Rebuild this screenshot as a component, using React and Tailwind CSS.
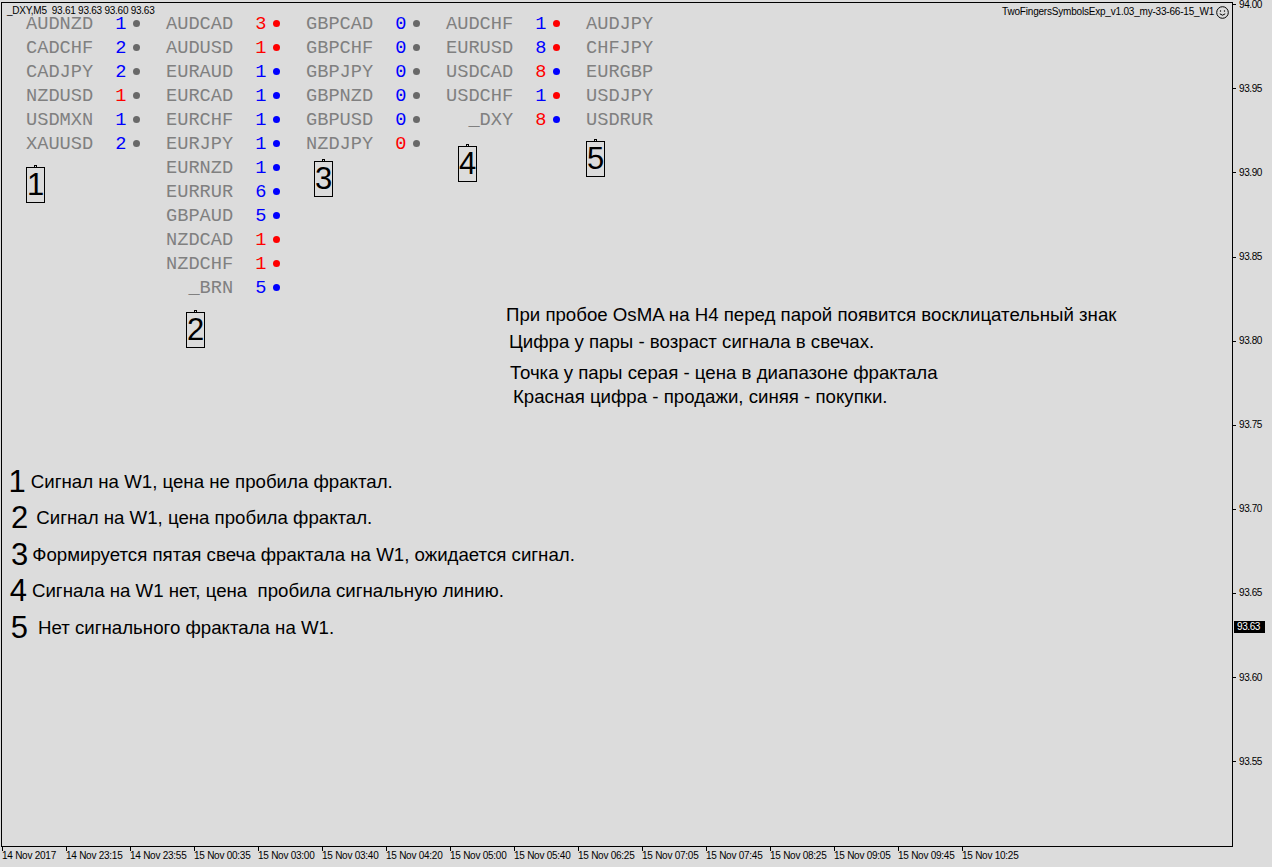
import React from 'react';

const numColor = { b: 'text-[#0000ff]', r: 'text-[#ff0000]' };
const dotColor = { b: 'bg-[#0000ff]', r: 'bg-[#ff0000]', g: 'bg-[#696969]' };

// name, age, age colour, dot colour
const columns = [
    [
        ['AUDNZD', '1', 'b', 'g'],
        ['CADCHF', '2', 'b', 'g'],
        ['CADJPY', '2', 'b', 'g'],
        ['NZDUSD', '1', 'r', 'g'],
        ['USDMXN', '1', 'b', 'g'],
        ['XAUUSD', '2', 'b', 'g'],
    ],
    [
        ['AUDCAD', '3', 'r', 'r'],
        ['AUDUSD', '1', 'r', 'r'],
        ['EURAUD', '1', 'b', 'b'],
        ['EURCAD', '1', 'b', 'b'],
        ['EURCHF', '1', 'b', 'b'],
        ['EURJPY', '1', 'b', 'b'],
        ['EURNZD', '1', 'b', 'b'],
        ['EURRUR', '6', 'b', 'b'],
        ['GBPAUD', '5', 'b', 'b'],
        ['NZDCAD', '1', 'r', 'r'],
        ['NZDCHF', '1', 'r', 'r'],
        ['_BRN', '5', 'b', 'b'],
    ],
    [
        ['GBPCAD', '0', 'b', 'g'],
        ['GBPCHF', '0', 'b', 'g'],
        ['GBPJPY', '0', 'b', 'g'],
        ['GBPNZD', '0', 'b', 'g'],
        ['GBPUSD', '0', 'b', 'g'],
        ['NZDJPY', '0', 'r', 'g'],
    ],
    [
        ['AUDCHF', '1', 'b', 'r'],
        ['EURUSD', '8', 'b', 'r'],
        ['USDCAD', '8', 'r', 'b'],
        ['USDCHF', '1', 'b', 'r'],
        ['_DXY', '8', 'r', 'b'],
    ],
    [['AUDJPY'], ['CHFJPY'], ['EURGBP'], ['USDJPY'], ['USDRUR']],
];

const prices = ['94.00', '93.95', '93.90', '93.85', '93.80', '93.75', '93.70', '93.65', '93.60', '93.55'];

const times = [
    '14 Nov 2017', '14 Nov 23:15', '14 Nov 23:55', '15 Nov 00:35', '15 Nov 03:00', '15 Nov 03:40',
    '15 Nov 04:20', '15 Nov 05:00', '15 Nov 05:40', '15 Nov 06:25', '15 Nov 07:05', '15 Nov 07:45',
    '15 Nov 08:25', '15 Nov 09:05', '15 Nov 09:45', '15 Nov 10:25',
];

const Pair = ({ row }) => {
    const [name, age, nc, dc] = row;
    return (
        <div className="flex h-[24px] items-center leading-[16px]">
            <span className="w-[67.2px] text-right whitespace-pre text-[#808080]">{name}</span>
            {age && (
                <>
                    <span className={`ml-[22px] w-[11.2px] ${numColor[nc]}`}>{age}</span>
                    <span className={`mb-[2px] ml-[7px] h-[7px] w-[7px] rounded-full ${dotColor[dc]}`} />
                </>
            )}
        </div>
    );
};

// numbered price-label objects on the chart
const Tag = ({ n, pos }) => (
    <div className={`absolute ${pos} flex h-[36px] w-[19px] items-center justify-center border border-black text-[31px] leading-[32px] text-black`}>
        <span className="absolute -top-[3px] left-[7px] h-[3px] w-[3px] border border-b-0 border-black" />
        {n}
    </div>
);

const Smiley = () => (
    <svg width="13" height="13" viewBox="0 0 13 13" fill="none" stroke="black" strokeWidth="1">
        <circle cx="6.5" cy="6.5" r="5.8" />
        <circle cx="4.5" cy="5" r="0.7" fill="black" stroke="none" />
        <circle cx="8.5" cy="5" r="0.7" fill="black" stroke="none" />
        <path d="M3.8 7.8 Q6.5 10.6 9.2 7.8" />
    </svg>
);

const legend = [
    ['1', 'Сигнал на W1, цена не пробила фрактал.', 'h-[37px]', 'ml-[6.6px]', 'ml-[5px]'],
    ['2', 'Сигнал на W1, цена пробила фрактал.', 'h-[36px]', 'ml-[9px]', 'ml-[8px]'],
    ['3', 'Формируется пятая свеча фрактала на W1, ожидается сигнал.', 'h-[37px]', 'ml-[9px]', 'ml-[4px]'],
    ['4', 'Сигнала на W1 нет, цена  пробила сигнальную линию.', 'h-[36px]', 'ml-[7.7px]', 'ml-[5px]'],
    ['5', 'Нет сигнального фрактала на W1.', 'h-[37px]', 'ml-[8.8px]', 'ml-[10px]'],
];

export default function App() {
    return (
        <div className="h-[867px] w-[1272px] overflow-hidden bg-[#dcdcdc] font-['Liberation_Sans',Arial,sans-serif] text-black">
            <div className="flex">
                {/* chart window */}
                <div className="relative ml-[1px] mt-[2px] h-[845px] w-[1232px] border border-black">
                    <div className="absolute left-[5px] top-[3.2px] whitespace-pre text-[10px] leading-[9px] tracking-[-0.25px]">
                        _DXY,M5  93.61 93.63 93.60 93.63
                    </div>
                    <div className="absolute right-[3px] top-[3px] flex items-start gap-[2px]">
                        <span className="text-[10px] leading-[12px] tracking-[-0.2px]">TwoFingersSymbolsExp_v1.03_my-33-66-15_W1</span>
                        <Smiley />
                    </div>

                    <div className="flex pl-[24px] pt-[9px] font-['Liberation_Mono','Courier_New',monospace] text-[18.67px]">
                        {columns.map((col, i) => (
                            <div key={i} className="w-[140px]">
                                {col.map((row) => (
                                    <Pair key={row[0]} row={row} />
                                ))}
                            </div>
                        ))}
                    </div>

                    <Tag n="1" pos="left-[24px] top-[164px]" />
                    <Tag n="2" pos="left-[184px] top-[309px]" />
                    <Tag n="3" pos="left-[312px] top-[158px]" />
                    <Tag n="4" pos="left-[456px] top-[143px]" />
                    <Tag n="5" pos="left-[584px] top-[138px]" />

                    <div className="ml-[504px] mt-[5px] text-[18.67px] leading-[20px]">
                        <div>При пробое OsMA на H4 перед парой появится восклицательный знак</div>
                        <div className="mt-[7px] pl-[3px]">Цифра у пары - возраст сигнала в свечах.</div>
                        <div className="mt-[11px] pl-[4px]">Точка у пары серая - цена в диапазоне фрактала</div>
                        <div className="mt-[4px] pl-[7px]">Красная цифра - продажи, синяя - покупки.</div>
                    </div>

                    <div className="mt-[56px]">
                        {legend.map(([n, text, h, dm, tm]) => (
                            <div key={n} className={`flex items-center ${h}`}>
                                <span className={`${dm} text-[31px] leading-[36px]`}>{n}</span>
                                <span className={`${tm} whitespace-pre text-[18.67px] leading-[36px]`}>{text}</span>
                            </div>
                        ))}
                    </div>
                </div>

                {/* price scale */}
                <div className="relative flex flex-1 flex-col pt-[4.8px]">
                    {prices.map((p) => (
                        <div key={p} className="flex h-[84.1px] shrink-0 flex-col">
                            <div className="-mt-[6px] flex h-[12px] items-center">
                                <span className="h-px w-[3px] bg-black" />
                                <span className="ml-[3px] text-[10px] leading-[12px] tracking-[-0.4px]">{p}</span>
                            </div>
                        </div>
                    ))}
                    <div className="absolute left-[1px] top-[621px] h-[12px] w-[31px] bg-black pl-[3px] text-[10px] leading-[12px] tracking-[-0.4px] text-white">
                        93.63
                    </div>
                </div>
            </div>

            {/* time scale */}
            <div className="flex pl-[2px]">
                {times.map((t) => (
                    <div key={t} className="w-[64px]">
                        <div className="h-[4px] w-px bg-black" />
                        <div className="-mt-[1.5px] whitespace-pre text-[10px] leading-[12px] tracking-[-0.25px]">{t}</div>
                    </div>
                ))}
            </div>
        </div>
    );
}
